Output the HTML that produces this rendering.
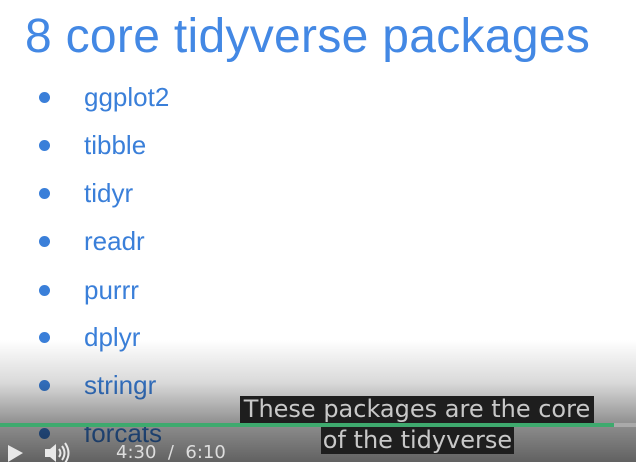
<!DOCTYPE html>
<html><head><style>
body{margin:0;width:636px;height:462px;overflow:hidden;background:#fff;position:relative;font-family:"Liberation Sans",sans-serif}
.t{position:absolute;left:25px;top:9px;font-size:48px;color:#4388e4;letter-spacing:0.3px;white-space:nowrap}
.i{position:absolute;left:84px;font-size:26px;color:#3a7fd9;line-height:28px}
.b{position:absolute;left:39px;width:11px;height:11px;border-radius:50%;background:#3a7fd9}
.g{position:absolute;left:0;top:340px;width:636px;height:122px;background:linear-gradient(to bottom,rgba(0,0,0,0) 0%,rgba(0,0,0,0.15) 35%,rgba(0,0,0,0.45) 70%,rgba(0,0,0,0.62) 100%)}
.c{position:absolute;background:#1e1e1e;color:#c8c8c8;font-family:"DejaVu Sans",sans-serif;font-size:24px;line-height:27px;white-space:nowrap;overflow:hidden}
</style></head><body>
<div class="t">8 core tidyverse packages</div>
<div class="b" style="top:92px"></div><div class="i" style="top:83px">ggplot2</div>
<div class="b" style="top:140px"></div><div class="i" style="top:131px">tibble</div>
<div class="b" style="top:188px"></div><div class="i" style="top:179px">tidyr</div>
<div class="b" style="top:236px"></div><div class="i" style="top:227px">readr</div>
<div class="b" style="top:285px"></div><div class="i" style="top:276px">purrr</div>
<div class="b" style="top:332px"></div><div class="i" style="top:323px">dplyr</div>
<div class="b" style="top:380px"></div><div class="i" style="top:371px">stringr</div>
<div class="b" style="top:428px"></div><div class="i" style="top:419px">forcats</div>
<div class="g"></div>
<div style="position:absolute;left:0;top:423px;width:614px;height:4px;background:#3eaa6e"></div>
<div style="position:absolute;left:614px;top:423px;width:22px;height:4px;background:#aaa"></div>
<div class="c" style="left:240px;top:396px;width:354px;text-align:center">These packages are the core</div>
<div class="c" style="left:321px;top:427px;width:193px;text-align:center">of the tidyverse</div>
<svg style="position:absolute;left:0;top:440px" width="100" height="22">
<polygon points="8,5 23,13 8,22" fill="#e8e8e8"/>
<polygon points="45,9 50,9 56,4 56,22 50,17 45,17" fill="#e8e8e8"/>
<path d="M59,9 Q62,13 59,17 M62,6 Q67,13 62,20 M65,3 Q72,13 65,23" stroke="#e8e8e8" stroke-width="2" fill="none"/>
</svg>
<div style="position:absolute;left:116px;top:442px;font-size:18px;color:#ddd;font-family:'DejaVu Sans',sans-serif;white-space:nowrap">4:30 &nbsp;/&nbsp; 6:10</div>
</body></html>
